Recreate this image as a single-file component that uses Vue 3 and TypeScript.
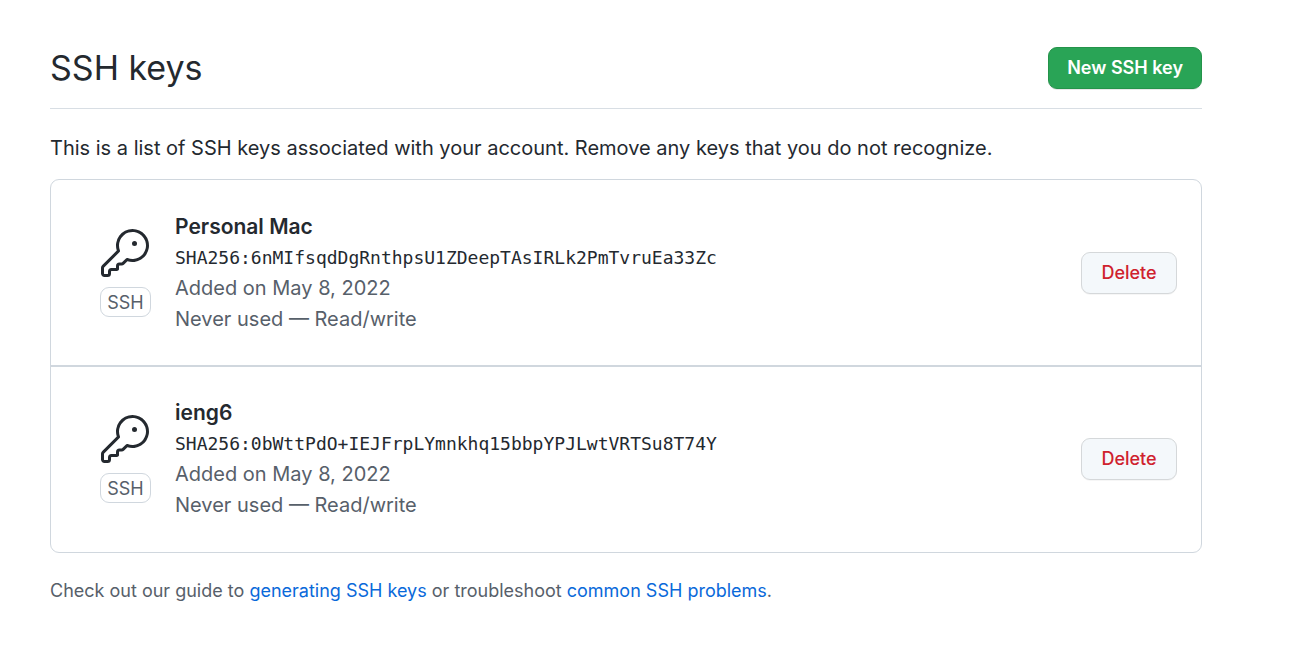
<script setup lang="ts">
interface SshKey {
  title: string
  fingerprint: string
  added: string
  usage: string
}

const keys: SshKey[] = [
  {
    title: 'Personal Mac',
    fingerprint: 'SHA256:6nMIfsqdDgRnthpsU1ZDeepTAsIRLk2PmTvruEa33Zc',
    added: 'Added on May 8, 2022',
    usage: 'Never used — Read/write',
  },
  {
    title: 'ieng6',
    fingerprint: 'SHA256:0bWttPdO+IEJFrpLYmnkhq15bbpYPJLwtVRTSu8T74Y',
    added: 'Added on May 8, 2022',
    usage: 'Never used — Read/write',
  },
]
</script>

<template>
  <main class="page">
    <header class="heading">
      <h1>SSH keys</h1>
      <button type="button" class="btn primary">New SSH key</button>
    </header>
    <p class="intro">
      This is a list of SSH keys associated with your account. Remove any keys that you do not recognize.
    </p>
    <ul class="list">
      <li v-for="key in keys" :key="key.fingerprint" class="row">
        <div class="kind">
          <svg class="icon" viewBox="0 0 24 24" aria-hidden="true">
            <path d="M16.75 8.5a1.25 1.25 0 1 0 0-2.5 1.25 1.25 0 0 0 0 2.5z" />
            <path
              fill-rule="evenodd"
              d="M15.75 0a8.25 8.25 0 0 0-7.851 10.79L.513 18.178A1.75 1.75 0 0 0 0 19.414v2.836C0 23.217.784 24 1.75 24h1.5A1.75 1.75 0 0 0 5 22.25v-1a.25.25 0 0 1 .25-.25h2.735a.75.75 0 0 0 .545-.22l.214-.213A.875.875 0 0 0 9 19.948V18.5a.25.25 0 0 1 .25-.25h1.086c.464 0 .91-.184 1.237-.513l1.636-1.636A8.25 8.25 0 1 0 15.75 0zM9 8.25a6.75 6.75 0 1 1 4.288 6.287.75.75 0 0 0-.804.168l-1.971 1.972a.25.25 0 0 1-.177.073H9.25A1.75 1.75 0 0 0 7.5 18.5v1H5.25a1.75 1.75 0 0 0-1.75 1.75v1a.25.25 0 0 1-.25.25h-1.5a.25.25 0 0 1-.25-.25v-2.836a.25.25 0 0 1 .073-.177l7.722-7.721a.75.75 0 0 0 .168-.804A6.73 6.73 0 0 1 9 8.25z"
            />
          </svg>
          <span class="badge">SSH</span>
        </div>
        <div class="details">
          <strong>{{ key.title }}</strong>
          <code>{{ key.fingerprint }}</code>
          <span>{{ key.added }}</span>
          <span>{{ key.usage }}</span>
        </div>
        <button type="button" class="btn danger" :aria-label="`Delete ${key.title}`">Delete</button>
      </li>
    </ul>
    <p class="help">
      Check out our guide to <a href="#generating">generating SSH keys</a> or troubleshoot
      <a href="#problems">common SSH problems</a>.
    </p>
  </main>
</template>

<style>
body {
  margin: 0;
  background: #fff;
}
</style>

<style scoped>
.page {
  padding: 44px 104px 0 50px;
  font-family: Inter, "Liberation Sans", sans-serif;
  font-size: 20px;
  line-height: 31px;
  color: #24292f;
}
.heading {
  display: flex;
  align-items: center;
  justify-content: space-between;
  padding: 3px 0 19px;
  border-bottom: 1px solid #d8dee4;
}
h1 {
  margin: 0;
  font-size: 34px;
  line-height: 42px;
  font-weight: 400;
}
.btn {
  box-sizing: border-box;
  height: 42px;
  border: 1px solid #d5d8da;
  border-radius: 9px;
  font-family: inherit;
  font-size: 18px;
  line-height: 28px;
  font-weight: 500;
  cursor: pointer;
}
.primary {
  padding: 0 18px;
  border-color: #24934a;
  background: #29a456;
  color: #fff;
  font-weight: 600;
  box-shadow: 0 1px 0 rgba(27, 31, 36, 0.1);
}
.danger {
  min-width: 96px;
  padding: 0 18px;
  background: #f4f8fb;
  color: #cf222e;
  box-shadow: 0 1px 0 rgba(27, 31, 36, 0.04);
}
.intro {
  margin: 24px 0 15px;
}
.list {
  margin: 0;
  padding: 0;
  list-style: none;
  border: 1px solid #d0d7de;
  border-radius: 9px;
}
.row {
  display: flex;
  align-items: center;
  padding: 31px 24px 30px 49px;
}
.row + .row {
  padding-top: 30px;
  padding-bottom: 31px;
  border-top: 2px solid #d0d7de;
}
.kind {
  display: flex;
  flex-direction: column;
  gap: 10px;
  width: 51px;
  margin-right: 24px;
}
.icon {
  width: 48px;
  height: 48px;
  margin-left: 1px;
  fill: #24292f;
}
.badge {
  box-sizing: border-box;
  height: 30px;
  border: 1px solid #d0d7de;
  border-radius: 9px;
  text-align: center;
  font-size: 18px;
  line-height: 29px;
  color: #57606a;
}
.details {
  display: flex;
  flex: 1;
  flex-direction: column;
  color: #57606a;
}
strong {
  font-size: 21px;
  font-weight: 600;
  color: #24292f;
}
code {
  font-family: "DejaVu Sans Mono", monospace;
  font-size: 18px;
  color: #24292f;
}
.help {
  margin: 22px 0 0;
  font-size: 18px;
  color: #57606a;
}
a {
  color: #0969da;
  text-decoration: none;
}
</style>
